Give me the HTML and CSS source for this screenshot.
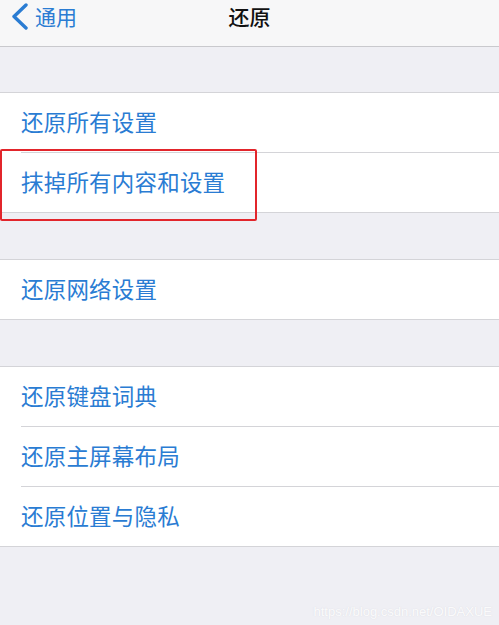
FILE: index.html
```html
<!DOCTYPE html>
<html lang="zh-CN">
<head>
    <meta charset="UTF-8">
    <meta name="viewport" content="width=device-width, initial-scale=1.0">
    <title>还原</title>
    <link rel="stylesheet" href="styles.css">
</head>
<body>
    <header class="nav">
        <a class="back" href="#">
            <svg class="chevron" width="18" height="28" viewBox="0 0 18 28">
                <path d="M15 2 L3 13.5 L15 25" fill="none" stroke="#2a7cd3" stroke-width="3.4" stroke-linecap="round" stroke-linejoin="round"/>
            </svg>
            <span>通用</span>
        </a>
        <h1 class="title">还原</h1>
    </header>

    <main>
        <section class="group marked">
            <div class="row"><span>还原所有设置</span></div>
            <div class="row"><span>抹掉所有内容和设置</span></div>
            <div class="highlight"></div>
        </section>

        <section class="group">
            <div class="row"><span>还原网络设置</span></div>
        </section>

        <section class="group">
            <div class="row"><span>还原键盘词典</span></div>
            <div class="row"><span>还原主屏幕布局</span></div>
            <div class="row"><span>还原位置与隐私</span></div>
        </section>
    </main>

    <div class="watermark">https://blog.csdn.net/OIDAXUE</div>
</body>
</html>
```

FILE: styles.css
```css
html {
    background-color: #efeff4;
}
body {
    margin: 0;
    padding: 0;
    min-height: 625px;
    position: relative;
    font-family: "Noto Sans CJK SC", "Noto Sans", sans-serif;
    background-color: #efeff4;
}
.nav {
    height: 46px;
    background-color: #f7f7f8;
    border-bottom: 1px solid #c9c9cd;
    display: flex;
    align-items: center;
    justify-content: center;
    position: relative;
}
.back {
    position: absolute;
    left: 11px;
    top: 3px;
    display: flex;
    align-items: center;
    gap: 6px;
    color: #2a7cd3;
    text-decoration: none;
    font-size: 21px;
    line-height: 28px;
}
.back span {
    margin-top: -3px;
}
.chevron {
    display: block;
}
.title {
    margin: 0;
    font-size: 21px;
    font-weight: 500;
    color: #111;
    line-height: 30px;
    margin-top: -14px;
}
main {
    padding-top: 45px;
}
.group {
    background-color: #fff;
    border-top: 1px solid #d4d4d8;
    border-bottom: 1px solid #d4d4d8;
    margin-bottom: 46px;
    position: relative;
}
.row {
    height: 59px;
    margin-left: 21px;
    display: flex;
    align-items: center;
    color: #2a7cd3;
    font-size: 22.5px;
    letter-spacing: 0.2px;
}
.row span {
    margin-top: -3px;
}
.row + .row {
    border-top: 1px solid #d4d4d8;
}
.highlight {
    position: absolute;
    left: 0;
    top: 56px;
    width: 253px;
    height: 68px;
    border: 2px solid #e2252b;
    border-radius: 2px;
}
.watermark {
    position: absolute;
    right: 7px;
    bottom: 6px;
    font-family: "Liberation Sans", sans-serif;
    font-size: 13px;
    color: rgba(255, 255, 255, 0.9);
    text-shadow: 0 0 1px rgba(200, 200, 210, 0.6);
}
```
